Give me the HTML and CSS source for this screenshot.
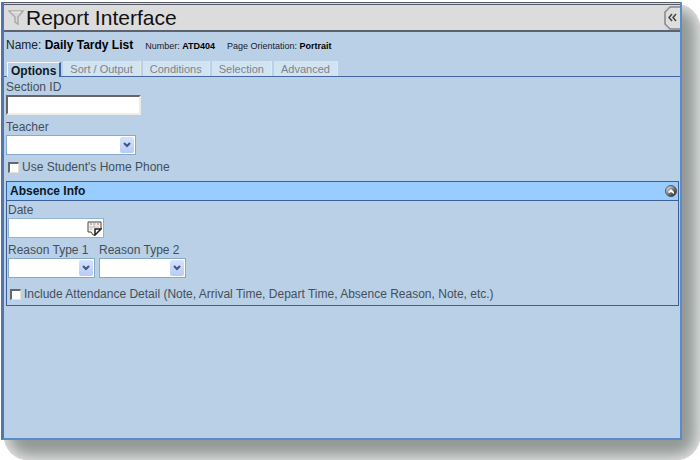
FILE: index.html
```html
<!DOCTYPE html>
<html lang="en">
<head>
<meta charset="utf-8">
<title>Report Interface</title>
<link rel="stylesheet" href="styles.css">
</head>
<body>
<main class="window">
  <header class="titlebar">
    <svg class="filter" viewBox="0 0 17 17" aria-hidden="true"><path d="M1 2h14l-5 6v7l-3-2V8z" fill="#d8d8d8" stroke="#aaa" stroke-width="1.5"/><path d="M3 3h10" fill="none" stroke="#eee"/></svg>
    <h1>Report Interface</h1>
    <button class="collapse" type="button" aria-label="Collapse panel">
      <svg viewBox="0 0 16 24" aria-hidden="true"><path d="M16 1H6L1 6v12l5 5h10" fill="#dedede" stroke="#858585" stroke-width="1.5"/><path d="M1 4l3-3M1 20l3 3" stroke="#b9d9f4" stroke-width="1.5"/><path d="M8 8l-3 3.500L8 15M12 8l-3 3.500L12 15" fill="none" stroke="#444" stroke-width="1.5"/></svg>
    </button>
  </header>
  <div class="summary">
    <span class="name">Name: <b>Daily Tardy List</b></span>
    <span>Number: <b>ATD404</b></span>
    <span>Page Orientation: <b>Portrait</b></span>
  </div>
  <nav class="tabs" aria-label="Report settings">
    <button class="tab active" type="button">Options</button>
    <button class="tab" type="button">Sort / Output</button>
    <button class="tab" type="button">Conditions</button>
    <button class="tab" type="button">Selection</button>
    <button class="tab" type="button">Advanced</button>
  </nav>
  <form class="options">
    <div class="field">
      <label for="section">Section ID</label>
      <input class="text" id="section" type="text">
    </div>
    <div class="field">
      <label for="teacher">Teacher</label>
      <div class="select wide"><select id="teacher"><option></option></select><svg class="arrow" viewBox="0 0 14 16" aria-hidden="true"><path d="M4 6l3 3 3-3" fill="none" stroke="#3c5686" stroke-width="2"/></svg></div>
    </div>
    <label class="check"><input type="checkbox">Use Student's Home Phone</label>
    <section class="group">
      <div class="group-head">
        <h2>Absence Info</h2>
        <button class="orb" type="button" aria-label="Collapse Absence Info">
          <svg viewBox="0 0 12 12" aria-hidden="true"><defs><linearGradient id="metal" x2="1" y2="1"><stop offset="0" stop-color="#fff"/><stop offset=".45" stop-color="#888"/><stop offset="1" stop-color="#111"/></linearGradient></defs><circle cx="6" cy="6" r="5.500" fill="url(#metal)" stroke="#555"/><path d="M3 7l3-3 3 3v2L6 7 4 8z" fill="#fff"/></svg>
        </button>
      </div>
      <div class="group-body">
        <div class="field">
          <label for="date">Date</label>
          <div class="date"><input id="date" type="text"><button type="button" aria-label="Choose date"><svg viewBox="0 0 15 15" aria-hidden="true"><path d="M1 1h13v7l-6 6H6l-2-3H1z" fill="#f2f2f0" stroke="#444"/><path d="M14 8l-6 6V8z" fill="#fff" stroke="#222" stroke-width="1.5"/><path d="M3 3h2M10 3h2" stroke="#d2643c"/><path d="M6 3h3M2 6h10M7 2v4" stroke="#bbb"/><path d="M3 8h2" stroke="#d9b098"/></svg></button></div>
        </div>
        <div class="pair">
          <div class="field">
            <label for="reason1">Reason Type 1</label>
            <div class="select"><select id="reason1"><option></option></select><svg class="arrow" viewBox="0 0 14 16" aria-hidden="true"><path d="M4 6l3 3 3-3" fill="none" stroke="#3c5686" stroke-width="2"/></svg></div>
          </div>
          <div class="field">
            <label for="reason2">Reason Type 2</label>
            <div class="select"><select id="reason2"><option></option></select><svg class="arrow" viewBox="0 0 14 16" aria-hidden="true"><path d="M4 6l3 3 3-3" fill="none" stroke="#3c5686" stroke-width="2"/></svg></div>
          </div>
        </div>
        <label class="check"><input type="checkbox">Include Attendance Detail (Note, Arrival Time, Depart Time, Absence Reason, Note, etc.)</label>
      </div>
    </section>
  </form>
</main>
</body>
</html>
```
FILE: styles.css
```css
* { box-sizing: border-box; }

body {
  margin: 0;
  min-height: 100vh;
  display: flex;
  padding: 2px 18px 20px 1px;
  background: #fff;
  color: #444f5c;
  font: 12px/16px "Liberation Sans", Arial, sans-serif;
}

button, input, select { font: inherit; margin: 0; padding: 0; }
button { border: 0; background: none; }
h1, h2 { margin: 0; }
svg { display: block; }

.window {
  position: relative;
  flex: 1;
  background: #b9d0e6;
  border: solid #5a8cc8;
  border-width: 0 2px 2px 0;
  border-left: 3px solid #5276ac;
}

/* Soft rounded shadow below and to the right of the window */
.window::before {
  content: "";
  position: absolute;
  z-index: -1;
  inset: 2px -20px -22px 0;
  border-radius: 24px;
  background: #929895;
  box-shadow: inset 0 0 16px 3px #f0f0f0;
}

.titlebar {
  display: flex;
  align-items: center;
  height: 30px;
  padding-left: 4px;
  background: #dcdcdc;
  border-top: 3px double #555a66;
  border-bottom: 2px solid #5b6370;
}
.filter { width: 17px; height: 17px; }
h1 { flex: 1; padding-left: 1px; color: #111; font-size: 21px; line-height: 24px; font-weight: 400; }
.collapse svg { width: 16px; height: 24px; }

.summary {
  display: flex;
  align-items: baseline;
  gap: 12px;
  padding: 5px 2px 7px;
  color: #18202c;
  font-size: 9px;
}
.summary b { color: #000; }
.summary .name { font-size: 12px; }

.tabs {
  display: flex;
  align-items: flex-end;
  gap: 2px;
  padding-left: 3px;
  border-bottom: 1px solid #4468a4;
}
.tab {
  height: 15px;
  padding: 0 7px;
  background: #d2e4f2;
  border-right: 1px solid #e2e8e4;
  color: #7d8388;
  font-size: 11px;
}
.tab.active {
  padding: 0 3px;
  margin-bottom: -1px;
  background: #b9d0e6;
  border: solid #f4f8fc;
  border-width: 1px 2px 0 1px;
  border-right-color: #3d609c;
  color: #101820;
  font-size: 12px;
  font-weight: 700;
}

.options { padding: 2px 1px 0 2px; }
.field { display: flex; flex-direction: column; align-items: flex-start; margin-bottom: 4px; }
.text {
  width: 135px;
  height: 20px;
  background: #fff;
  border: 2px solid;
  border-color: #666 #eeece4 #eeece4 #666;
}
.select {
  display: flex;
  width: 87px;
  height: 20px;
  padding: 1px;
  background: #fff;
  border: 1px solid #86aace;
}
.select.wide { width: 130px; }
.select select { flex: 1; min-width: 0; appearance: none; border: 0; background: #fff; }
.arrow { width: 14px; height: 16px; background: linear-gradient(#d5e2fc, #b7cdf6); border-radius: 2px; pointer-events: none; }

.check { display: flex; align-items: center; gap: 3px; padding-left: 2px; }
.check input {
  appearance: none;
  width: 11px;
  height: 11px;
  background: #fff;
  border: solid;
  border-width: 2px 1px 1px 2px;
  border-color: #626870 #e6e2da #e6e2da #626870;
}

.group { margin-top: 6px; border: 1px solid #3d5f96; }
.group-head {
  display: flex;
  align-items: center;
  justify-content: space-between;
  height: 19px;
  padding: 0 1px 0 3px;
  background: #99ccff;
  border-bottom: 1px solid #3d5f96;
}
h2 { color: #101820; font-size: 12px; line-height: 16px; }
.orb svg { width: 12px; height: 12px; }
.group-body { padding: 1px 1px 3px; }
.date { display: flex; width: 96px; height: 20px; padding: 1px; background: #fff; border: 1px solid #8fb4d4; }
.date input { flex: 1; min-width: 0; border: 0; background: #fff; }
.date svg { width: 15px; height: 15px; }
.pair { display: flex; gap: 4px; padding-bottom: 4px; }
```
